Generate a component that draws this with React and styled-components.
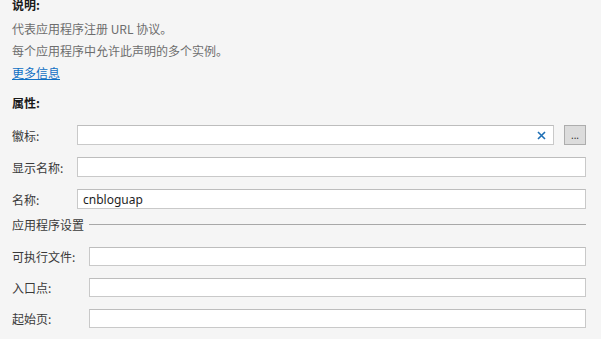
import React from "react";
import styled, { createGlobalStyle } from "styled-components";

const GlobalStyle = createGlobalStyle`
  html, body {
    margin: 0;
    padding: 0;
    background: #f5f5f5;
    overflow: hidden;
  }
  body {
    font-family: "Noto Sans CJK SC", "Noto Sans", sans-serif;
    font-size: 12px;
    color: #333;
  }
`;

const Page = styled.div`
  width: 601px;
  height: 339px;
  box-sizing: border-box;
  padding: 0 15px 0 12px;
  display: flex;
  flex-direction: column;
`;

const Heading = styled.div`
  font-weight: bold;
  color: #1a1a1a;
  line-height: 22px;
  margin-top: ${({ $top }) => $top}px;
`;

const Desc = styled.div`
  color: #6d6d6d;
  line-height: 22px;
  margin-top: ${({ $top }) => $top || 0}px;
`;

const Link = styled.a`
  color: #1070c4;
  text-decoration: underline;
  line-height: 22px;
  cursor: pointer;
  align-self: flex-start;
`;

const Form = styled.div`
  display: flex;
  flex-direction: column;
  gap: 12px;
  margin-top: ${({ $top }) => $top}px;
`;

const Row = styled.div`
  display: flex;
  align-items: center;
  height: ${({ $h }) => $h}px;
`;

const Label = styled.div`
  width: ${({ $w }) => $w}px;
  flex: none;
  color: #3a3a3a;
`;

const Field = styled.div`
  flex: 1;
  height: 100%;
  box-sizing: border-box;
  background: #fff;
  border: 1px solid #c9c9c9;
  border-top-color: #bdbdbd;
  display: flex;
  align-items: center;
  padding: 0 7px 0 5px;
  font-family: "Segoe UI", "Noto Sans", "Noto Sans CJK SC", sans-serif;
  font-size: 12px;
  color: #1e1e1e;
`;

const Value = styled.span`
  flex: 1;
`;

const Browse = styled.button`
  width: 22px;
  height: 20px;
  margin-left: 10px;
  flex: none;
  box-sizing: border-box;
  background: #dcdcdc;
  border: 1px solid #adadad;
  padding: 0;
  font-size: 10px;
  line-height: 18px;
  color: #333;
  font-family: "Noto Sans", sans-serif;
`;

const Section = styled.div`
  display: flex;
  align-items: center;
  height: 20px;
  margin-top: 5px;
  color: #3a3a3a;
`;

const Rule = styled.div`
  flex: 1;
  height: 1px;
  background: #a8a8a8;
  margin-left: 5px;
`;

const ClearIcon = () => (
  <svg width="9" height="9" viewBox="0 0 9 9">
    <path d="M1 1L8 8M8 1L1 8" stroke="#1f6fb5" strokeWidth="1.6" />
  </svg>
);

const App = () => {
  const settings = ["可执行文件:", "入口点:", "起始页:"];
  return (
    <Page>
      <GlobalStyle />
      <Heading $top={-6}>说明:</Heading>
      <Desc $top={2}>代表应用程序注册 URL 协议。</Desc>
      <Desc>每个应用程序中允许此声明的多个实例。</Desc>
      <Link>更多信息</Link>
      <Heading $top={8}>属性:</Heading>
      <Form $top={11}>
        <Row $h={20}>
          <Label $w={65}>徽标:</Label>
          <Field>
            <Value />
            <ClearIcon />
          </Field>
          <Browse>...</Browse>
        </Row>
        <Row $h={20}>
          <Label $w={65}>显示名称:</Label>
          <Field />
        </Row>
        <Row $h={20}>
          <Label $w={65}>名称:</Label>
          <Field>
            <Value>cnbloguap</Value>
          </Field>
        </Row>
      </Form>
      <Section>
        应用程序设置
        <Rule />
      </Section>
      <Form $top={13}>
        {settings.map((s) => (
          <Row $h={19} key={s}>
            <Label $w={77}>{s}</Label>
            <Field />
          </Row>
        ))}
      </Form>
    </Page>
  );
};

export default App;
